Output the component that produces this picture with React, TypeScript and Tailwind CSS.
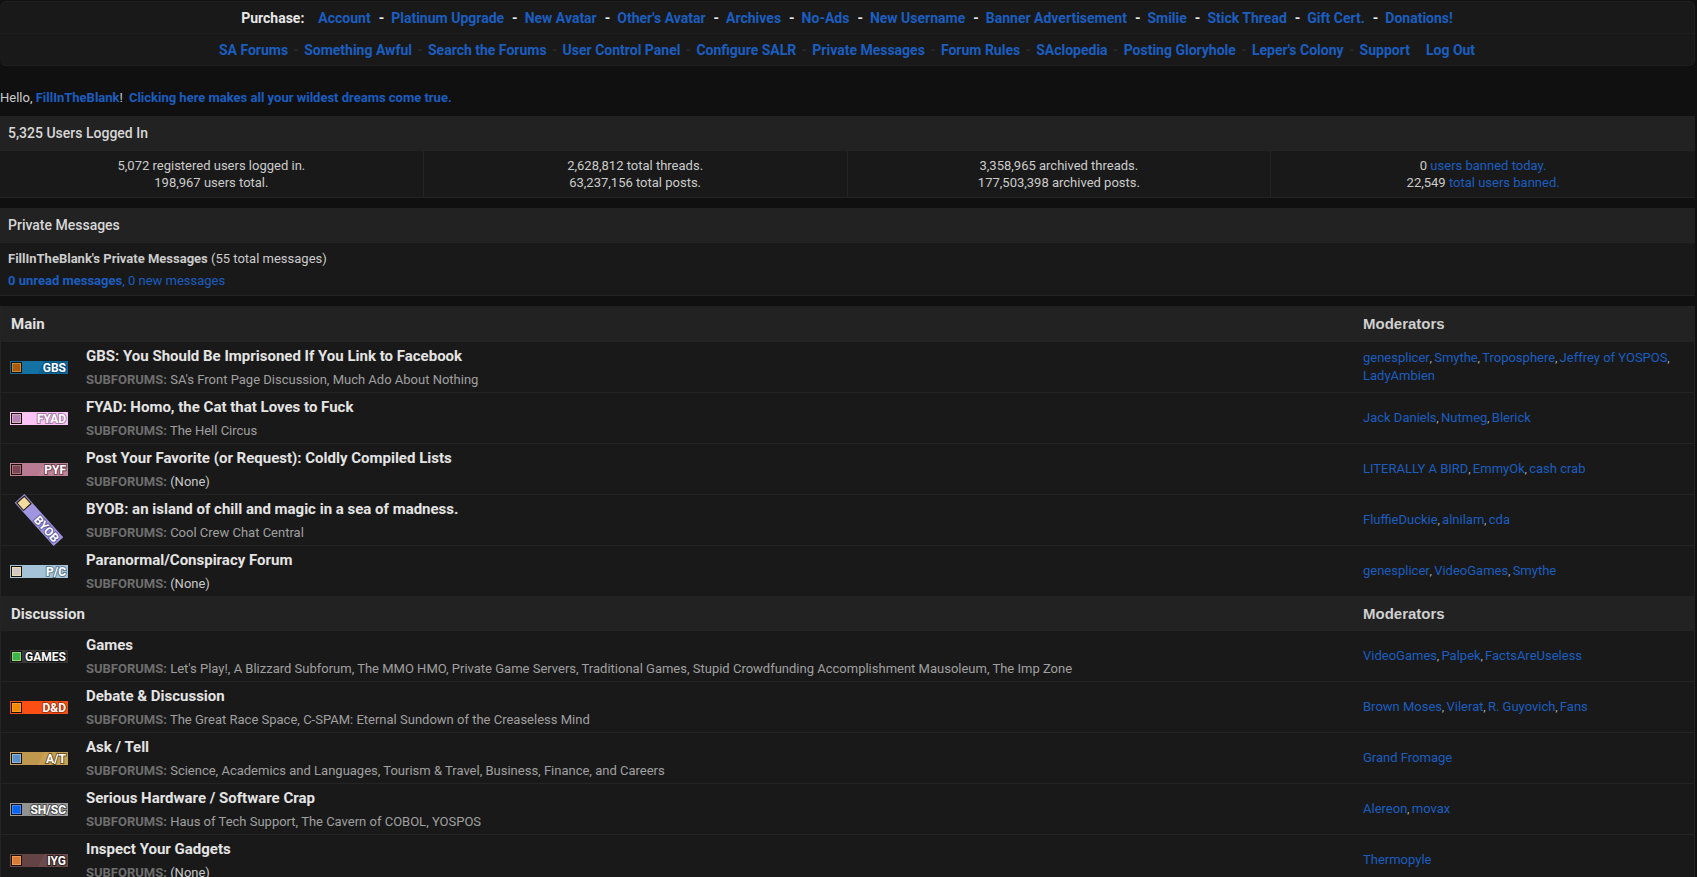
import { Fragment } from "react";

type Tag = { text: string; bg: string; box: string; edge: string; outline: string; shade?: string; tilt?: boolean };
type Forum = { name: string; subs: string[]; mods: string[]; tag: Tag };
type Category = { name: string; forums: Forum[] };

const purchaseLinks = [
  "Account", "Platinum Upgrade", "New Avatar", "Other's Avatar", "Archives", "No-Ads",
  "New Username", "Banner Advertisement", "Smilie", "Stick Thread", "Gift Cert.", "Donations!",
];

const siteLinks = [
  "SA Forums", "Something Awful", "Search the Forums", "User Control Panel", "Configure SALR",
  "Private Messages", "Forum Rules", "SAclopedia", "Posting Gloryhole", "Leper's Colony", "Support", "Log Out",
];

const categories: Category[] = [
  {
    name: "Main",
    forums: [
      {
        name: "GBS: You Should Be Imprisoned If You Link to Facebook",
        subs: ["SA's Front Page Discussion", "Much Ado About Nothing"],
        mods: ["genesplicer", "Smythe", "Troposphere", "Jeffrey of YOSPOS", "LadyAmbien"],
        tag: { text: "GBS", bg: "#0b6699", box: "#a85a08", edge: "#c98a35", outline: "#0a4f78", shade: "#1c7cb0" },
      },
      {
        name: "FYAD: Homo, the Cat that Loves to Fuck",
        subs: ["The Hell Circus"],
        mods: ["Jack Daniels", "Nutmeg", "Blerick"],
        tag: { text: "FYAD", bg: "#fbc4f6", box: "#b583b5", edge: "#d9a8c8", outline: "#a87ba6" },
      },
      {
        name: "Post Your Favorite (or Request): Coldly Compiled Lists",
        subs: [],
        mods: ["LITERALLY A BIRD", "EmmyOk", "cash crab"],
        tag: { text: "PYF", bg: "#bf8299", box: "#7a4458", edge: "#a86f75", outline: "#6e3f50", shade: "#b3748c" },
      },
      {
        name: "BYOB: an island of chill and magic in a sea of madness.",
        subs: ["Cool Crew Chat Central"],
        mods: ["FluffieDuckie", "alnilam", "cda"],
        tag: { text: "BYOB", bg: "#9f95e0", box: "#f3dc9e", edge: "#f3dc9e", outline: "#5f5799", tilt: true },
      },
      {
        name: "Paranormal/Conspiracy Forum",
        subs: [],
        mods: ["genesplicer", "VideoGames", "Smythe"],
        tag: { text: "P/C", bg: "#a3c4d8", box: "#d0c8c4", edge: "#f0dfb0", outline: "#5d7c92" },
      },
    ],
  },
  {
    name: "Discussion",
    forums: [
      {
        name: "Games",
        subs: ["Let's Play!", "A Blizzard Subforum", "The MMO HMO", "Private Game Servers", "Traditional Games", "Stupid Crowdfunding Accomplishment Mausoleum", "The Imp Zone"],
        mods: ["VideoGames", "Palpek", "FactsAreUseless"],
        tag: { text: "GAMES", bg: "#343434", box: "#3fb249", edge: "#8ddc7c", outline: "#111111", shade: "#444444" },
      },
      {
        name: "Debate & Discussion",
        subs: ["The Great Race Space", "C-SPAM: Eternal Sundown of the Creaseless Mind"],
        mods: ["Brown Moses", "Vilerat", "R. Guyovich", "Fans"],
        tag: { text: "D&D", bg: "#fb4f14", box: "#f08a00", edge: "#ffa030", outline: "#a33009" },
      },
      {
        name: "Ask / Tell",
        subs: ["Science, Academics and Languages", "Tourism & Travel", "Business, Finance, and Careers"],
        mods: ["Grand Fromage"],
        tag: { text: "A/T", bg: "#c7a055", box: "#5b8fc7", edge: "#8fb6de", outline: "#6d5320", shade: "#b88f45" },
      },
      {
        name: "Serious Hardware / Software Crap",
        subs: ["Haus of Tech Support", "The Cavern of COBOL", "YOSPOS"],
        mods: ["Alereon", "movax"],
        tag: { text: "SH/SC", bg: "#9a9a9a", box: "#0a62f0", edge: "#3f8bff", outline: "#4a4a4a", shade: "#8a8a8a" },
      },
      {
        name: "Inspect Your Gadgets",
        subs: [],
        mods: ["Thermopyle"],
        tag: { text: "IYG", bg: "#6b4a4a", box: "#d97a35", edge: "#f09a58", outline: "#2c1c1c", shade: "#5c3c3c" },
      },
    ],
  },
];

const link = "text-[#1b5ec0] hover:underline";

function ForumTag({ tag }: { tag: Tag }) {
  const art = (
    <>
      <rect width="58" height="13" fill={tag.bg} />
      {tag.shade && <path d="M12 0H34L28 13H12Z" fill={tag.shade} opacity="0.5" />}
      <rect x="1" y="1" width="11" height="11" fill="#1a1208" />
      <rect x="2" y="2" width="9" height="9" fill={tag.edge} />
      <rect x="3" y="3" width="7" height="7" fill={tag.box} />
      <text
        x="56"
        y="11"
        textAnchor="end"
        fill="#fff"
        stroke={tag.outline}
        strokeWidth="2"
        paintOrder="stroke"
        className="font-[Roboto,sans-serif] text-[12px] font-bold"
      >
        {tag.text}
      </text>
    </>
  );
  return tag.tilt ? (
    <svg width="58" height="50" viewBox="0 0 58 50" className="block overflow-visible">
      <g transform="translate(29 25) rotate(48) translate(-29 -6.5)">{art}</g>
    </svg>
  ) : (
    <svg width="58" height="13" viewBox="0 0 58 13" className="block overflow-visible">{art}</svg>
  );
}

export default function App() {
  return (
    <div className="min-h-screen bg-[#101010] pr-0.5 pt-px font-[Roboto,sans-serif] text-[13px] leading-[17px] text-[#cccccc]">
      <nav className="rounded-md border border-l-0 border-[#212121] bg-[#191919] text-center text-sm font-bold">
        <div className="flex h-8 items-center justify-center border-b border-[#1e1e1e] text-[#e8e8e8]">
          <span className="mr-3.5">Purchase:</span>
          {purchaseLinks.map((label, i) => (
            <Fragment key={label}>
              {i > 0 && <span className="mr-[7px] ml-2">-</span>}
              <a href="#" className={link}>{label}</a>
            </Fragment>
          ))}
        </div>
        <div className="flex h-[31px] items-center justify-center">
          {siteLinks.map((label, i) => (
            <Fragment key={label}>
              {i > 0 && <span className="w-4 text-[#2a2a2a]">{i < 11 ? "-" : ""}</span>}
              <a href="#" className={link}>{label}</a>
            </Fragment>
          ))}
        </div>
      </nav>

      <p className="flex h-[50px] items-center pt-3">
        <span>Hello, <a href="#" className={`${link} font-bold`}>FillInTheBlank</a>!</span>
        <a href="#" className={`${link} ml-1.5 font-bold`}>Clicking here makes all your wildest dreams come true.</a>
      </p>

      <section className="border-b border-[#242424] bg-[#191919]">
        <h2 className="flex h-[34px] items-center bg-[#222] pl-2 text-sm font-medium text-[#d8d8d8]">5,325 Users Logged In</h2>
        <div className="grid grid-cols-4 divide-x divide-[#242424] border-t border-[#242424] text-center">
          <p className="py-1.5">5,072 registered users logged in.<br />198,967 users total.</p>
          <p className="py-1.5">2,628,812 total threads.<br />63,237,156 total posts.</p>
          <p className="py-1.5">3,358,965 archived threads.<br />177,503,398 archived posts.</p>
          <p className="py-1.5">
            0 <a href="#" className={link}>users banned today.</a><br />
            22,549 <a href="#" className={link}>total users banned.</a>
          </p>
        </div>
      </section>

      <section className="mt-2.5 border-b border-[#242424] bg-[#191919]">
        <h2 className="flex h-[34px] items-center bg-[#222] pl-2 text-sm font-medium text-[#d8d8d8]">Private Messages</h2>
        <div className="border-t border-[#242424] pt-[5px] pb-[3px] pl-2 leading-[22px]">
          <p><b>FillInTheBlank's Private Messages</b> (55 total messages)</p>
          <p><a href="#" className={link}><b>0 unread messages</b>, 0 new messages</a></p>
        </div>
      </section>

      <table className="mt-2.5 w-full table-fixed border-separate border-spacing-0 border-x border-[#242424] bg-[#191919] text-left">
        <colgroup>
          <col className="w-[77px]" />
          <col />
          <col className="w-[339px]" />
        </colgroup>
        {categories.map((category, index) => (
          <tbody key={category.name}>
            <tr className={`${index === 0 ? "h-[35px]" : "h-[34px]"} bg-[#222] text-[15px] text-[#e0e0e0]`}>
              <th colSpan={2} className="pt-0.5 pl-2.5 font-bold">{category.name}</th>
              <th className="pl-2 font-['Liberation_Sans',sans-serif] font-bold text-[#d0d0d0]">Moderators</th>
            </tr>
            {category.forums.map((forum) => (
              <tr key={forum.name} className="h-[51px]">
                <td className="border-t border-[#242424] pl-[9px]"><ForumTag tag={forum.tag} /></td>
                <td className="border-t border-[#242424] pt-0.5 pl-2">
                  <a href="#" className="block text-[15px] leading-6 font-bold text-[#e4e4e4]">{forum.name}</a>
                  <div className="leading-6 text-[#a0a0a0]">
                    <b className="text-[#6e6e6e]">SUBFORUMS:</b>{" "}
                    {forum.subs.length === 0 && <span className="text-[#c8c8c8]">(None)</span>}
                    {forum.subs.map((sub, i) => (
                      <Fragment key={sub}>{i > 0 && ", "}<a href="#">{sub}</a></Fragment>
                    ))}
                  </div>
                </td>
                <td className="border-t border-[#242424] pr-2 pl-2 text-[10px] leading-[17px]">
                  {forum.mods.map((mod, i) => (
                    <Fragment key={mod}>{i > 0 && ", "}<a href="#" className={`${link} text-[13px]`}>{mod}</a></Fragment>
                  ))}
                </td>
              </tr>
            ))}
          </tbody>
        ))}
      </table>
    </div>
  );
}
